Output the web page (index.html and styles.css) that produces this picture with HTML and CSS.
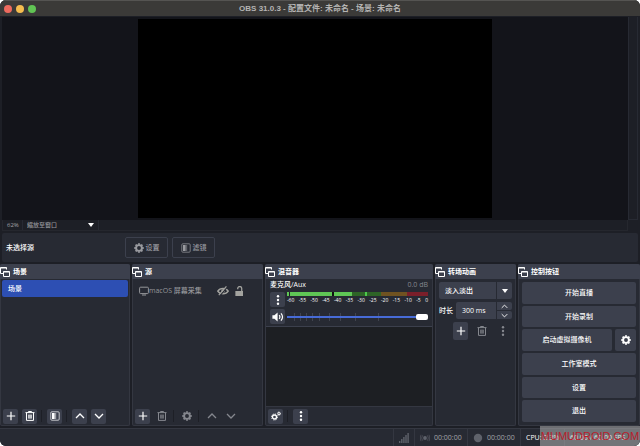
FILE: index.html
```
<!DOCTYPE html>
<html lang="zh-CN">
<head>
    <meta charset="UTF-8">
    <meta name="viewport" content="width=device-width, initial-scale=1.0">
    <title>OBS 31.0.3 - 配置文件: 未命名 - 场景: 未命名</title>
    <link rel="stylesheet" href="styles.css">
</head>
<body>
    <svg class="defs" aria-hidden="true">
        <symbol id="dock" viewBox="0 0 10 10"><path d="M3.5 6.5h-3v-6h6v2M.5 1h6M3.5 4.5h6v5h-6zM3.5 5h6" fill="none" stroke="currentColor"/></symbol>
        <symbol id="plus" viewBox="0 0 10 10"><path d="M5 .8v8.4M.8 5h8.4" fill="none" stroke="currentColor" stroke-width="1.2"/></symbol>
        <symbol id="trash" viewBox="0 0 10 10"><path d="M.5 1.6h9M3.5 1.4V.5h3v.9M1.5 2v7.4h7V2M3.8 3.6v4M5 3.6v4M6.2 3.6v4" fill="none" stroke="currentColor"/></symbol>
        <symbol id="filter" viewBox="0 0 10 10"><rect x=".8" y=".8" width="8.4" height="8.4" rx="1" fill="none" stroke="currentColor" opacity=".7"/><path d="M2 2h2.6v6H2z" fill="currentColor"/><path d="M4.6 2h1.6v6H4.6z" fill="currentColor" opacity=".5"/></symbol>
        <symbol id="up" viewBox="0 0 10 10"><path d="M1 7l4-4 4 4" fill="none" stroke="currentColor" stroke-width="1.3"/></symbol>
        <symbol id="down" viewBox="0 0 10 10"><path d="M1 3l4 4 4-4" fill="none" stroke="currentColor" stroke-width="1.3"/></symbol>
        <symbol id="dots" viewBox="0 0 10 10"><g fill="currentColor"><circle cx="5" cy="1.2" r="1.2"/><circle cx="5" cy="5" r="1.2"/><circle cx="5" cy="8.8" r="1.2"/></g></symbol>
        <symbol id="gear" viewBox="0 0 10 10"><circle cx="5" cy="5" r="2.9" fill="none" stroke="currentColor" stroke-width="1.9"/><path d="M5 .3v1.5M5 8.2v1.5M.3 5h1.5M8.2 5h1.5M1.6 1.6l1.1 1.1M7.3 7.3l1.1 1.1M1.6 8.4l1.1-1.1M7.3 2.7l1.1-1.1" stroke="currentColor" stroke-width="1.9"/></symbol>
        <symbol id="gears" viewBox="0 0 10 10"><g fill="none" stroke="currentColor"><circle cx="3.5" cy="6" r="2" stroke-width="1.3"/><circle cx="3.5" cy="6" r="3" stroke-dasharray="1.2 1.15"/><circle cx="8" cy="2.6" r="1.1"/><circle cx="8" cy="2.6" r="1.7" stroke-width=".7" stroke-dasharray=".7 .6"/></g></symbol>
        <symbol id="screen" viewBox="0 0 10 10"><rect x=".6" y="1.2" width="8.8" height="6.4" rx="1" fill="none" stroke="currentColor"/><path d="M3 9h4" stroke="currentColor"/></symbol>
        <symbol id="hidden" viewBox="0 0 12 10"><path d="M.8 5.2C3 1.6 9 1.6 11.2 5.2 9 8.6 3 8.6.8 5.2z" fill="none" stroke="currentColor" stroke-width="1.5"/><circle cx="6" cy="5" r="1.8" fill="currentColor"/><path d="M2.8 9.8L10.4.8" stroke="#272a33" stroke-width="1.2"/><path d="M1.8 9.2L9.4.4" stroke="currentColor" stroke-width="1.2"/></symbol>
        <symbol id="unlocked" viewBox="0 0 10 11"><path d="M1 5.4h8.4V11H1z" fill="currentColor"/><path d="M3.6 3.6V2.8a2.2 2.2 0 0 1 4.4 0v3" fill="none" stroke="currentColor" stroke-width="1.4"/></symbol>
        <symbol id="speaker" viewBox="0 0 12 10"><path d="M.4 3.2h2L5.6.4v9.2L2.4 6.8h-2z" fill="currentColor"/><path d="M7.2 3.2q1.4 1.8 0 3.6M9 1.4q3 3.6 0 7.2" fill="none" stroke="currentColor" stroke-width="1.2"/></symbol>
        <symbol id="signal" viewBox="0 0 10 10"><path d="M0 8h1.4v2H0zM2.1 6h1.4v4H2.1zM4.2 4h1.4v6H4.2zM6.3 2h1.4v8H6.3zM8.4 0h1.4v10H8.4z" fill="currentColor"/></symbol>
        <symbol id="live" viewBox="0 0 10 10"><circle cx="5" cy="5" r="1.9" fill="currentColor"/><path d="M2.6 2.4q-1.9 2.6 0 5.2M7.4 2.4q1.9 2.6 0 5.2M1 1.8q-1.5 3.2 0 6.4M9 1.8q1.5 3.2 0 6.4" fill="none" stroke="currentColor" stroke-width=".6"/></symbol>
        <symbol id="record" viewBox="0 0 10 10"><circle cx="5" cy="5" r="4.2" fill="currentColor"/></symbol>
    </svg>

    <div class="window">
        <header class="titlebar">
            <div class="lights">
                <button class="light close" aria-label="关闭"></button>
                <button class="light minimize" aria-label="最小化"></button>
                <button class="light zoom" aria-label="缩放"></button>
            </div>
            <h1>OBS 31.0.3 - 配置文件: 未命名 - 场景: 未命名</h1>
        </header>

        <main class="preview">
            <div class="stage"><div class="canvas"></div></div>
            <div class="scroll"></div>
            <div class="zoombar">
                <span class="percent">62%</span>
                <label class="scale">
                    <select aria-label="预览缩放"><option>缩放至窗口</option></select>
                    <span class="arrow"></span>
                </label>
            </div>
        </main>

        <section class="context">
            <span class="context-name">未选择源</span>
            <button class="context-btn"><svg class="icon"><use href="#gear"/></svg>设置</button>
            <button class="context-btn"><svg class="icon"><use href="#filter"/></svg>滤镜</button>
        </section>

        <div class="docks">
            <section class="dock">
                <h2><svg class="icon"><use href="#dock"/></svg>场景</h2>
                <ul class="list">
                    <li class="selected">场景</li>
                </ul>
                <div class="toolbar">
                    <button class="tool" aria-label="添加场景"><svg class="icon"><use href="#plus"/></svg></button>
                    <button class="tool" aria-label="移除场景"><svg class="icon"><use href="#trash"/></svg></button>
                    <i class="sep"></i>
                    <button class="tool" aria-label="场景滤镜"><svg class="icon"><use href="#filter"/></svg></button>
                    <i class="sep"></i>
                    <button class="tool" aria-label="上移"><svg class="icon"><use href="#up"/></svg></button>
                    <button class="tool" aria-label="下移"><svg class="icon"><use href="#down"/></svg></button>
                </div>
            </section>

            <section class="dock">
                <h2><svg class="icon"><use href="#dock"/></svg>源</h2>
                <ul class="list">
                    <li class="source">
                        <svg class="icon"><use href="#screen"/></svg>
                        <span class="source-name">macOS 屏幕采集</span>
                        <button class="toggle" aria-label="可见性"><svg class="icon wide"><use href="#hidden"/></svg></button>
                        <button class="toggle" aria-label="锁定"><svg class="icon"><use href="#unlocked"/></svg></button>
                    </li>
                </ul>
                <div class="toolbar">
                    <button class="tool" aria-label="添加源"><svg class="icon"><use href="#plus"/></svg></button>
                    <button class="tool" aria-label="移除源" disabled><svg class="icon"><use href="#trash"/></svg></button>
                    <i class="sep"></i>
                    <button class="tool" aria-label="源属性" disabled><svg class="icon"><use href="#gear"/></svg></button>
                    <i class="sep"></i>
                    <button class="tool" aria-label="上移" disabled><svg class="icon"><use href="#up"/></svg></button>
                    <button class="tool" aria-label="下移" disabled><svg class="icon"><use href="#down"/></svg></button>
                </div>
            </section>

            <section class="dock">
                <h2><svg class="icon"><use href="#dock"/></svg>混音器</h2>
                <div class="channel">
                    <div class="channel-head"><label for="volume">麦克风/Aux</label><span class="db">0.0 dB</span></div>
                    <div class="channel-row">
                        <button class="tool" aria-label="音频选项"><svg class="icon"><use href="#dots"/></svg></button>
                        <div class="level">
                            <div class="meter"></div>
                            <div class="ticks">
                                <span>-60</span><span>-55</span><span>-50</span><span>-45</span><span>-40</span><span>-35</span><span>-30</span><span>-25</span><span>-20</span><span>-15</span><span>-10</span><span>-5</span><span>0</span>
                            </div>
                        </div>
                    </div>
                    <div class="channel-row">
                        <button class="tool" aria-label="静音"><svg class="icon wide"><use href="#speaker"/></svg></button>
                        <input class="volume" id="volume" type="range" min="0" max="100" value="100">
                    </div>
                </div>
                <div class="mixer-space"></div>
                <div class="toolbar">
                    <button class="tool" aria-label="高级音频属性"><svg class="icon"><use href="#gears"/></svg></button>
                    <i class="sep"></i>
                    <button class="tool" aria-label="混音器菜单"><svg class="icon"><use href="#dots"/></svg></button>
                </div>
            </section>

            <section class="dock">
                <h2><svg class="icon"><use href="#dock"/></svg>转场动画</h2>
                <div class="transitions">
                    <label class="combo">
                        <select aria-label="转场"><option>淡入淡出</option></select>
                        <span class="arrow-box"><span class="arrow"></span></span>
                    </label>
                    <div class="duration">
                        <label for="duration">时长</label>
                        <input id="duration" type="text" value="300 ms">
                        <div class="steps">
                            <button aria-label="增加"><svg class="icon"><use href="#up"/></svg></button>
                            <button aria-label="减少"><svg class="icon"><use href="#down"/></svg></button>
                        </div>
                    </div>
                    <div class="transition-tools">
                        <button class="tool" aria-label="添加转场"><svg class="icon"><use href="#plus"/></svg></button>
                        <button class="tool" aria-label="移除转场" disabled><svg class="icon"><use href="#trash"/></svg></button>
                        <button class="tool" aria-label="转场属性" disabled><svg class="icon"><use href="#dots"/></svg></button>
                    </div>
                </div>
            </section>

            <section class="dock">
                <h2><svg class="icon"><use href="#dock"/></svg>控制按钮</h2>
                <div class="controls">
                    <button>开始直播</button>
                    <button>开始录制</button>
                    <div class="camera">
                        <button>启动虚拟摄像机</button>
                        <button class="camera-config" aria-label="配置虚拟摄像机"><svg class="icon"><use href="#gear"/></svg></button>
                    </div>
                    <button>工作室模式</button>
                    <button>设置</button>
                    <button>退出</button>
                </div>
            </section>
        </div>

        <footer class="status">
            <span class="cell"><svg class="icon"><use href="#signal"/></svg></span>
            <span class="cell timer"><svg class="icon"><use href="#live"/></svg>00:00:00</span>
            <span class="cell timer"><svg class="icon"><use href="#record"/></svg>00:00:00</span>
            <span class="cell cpu">CPU: 2.3%</span>
            <span class="cell fps">60.00 / 60.00 FPS</span>
        </footer>

        <div class="watermark">MUMUDROID.COM</div>
    </div>
</body>
</html>
```
FILE: styles.css
```
* {
    box-sizing: border-box;
}
body {
    margin: 0;
    background-color: #fff;
    font-family: "Open Sans", "Noto Sans CJK SC", sans-serif;
    font-size: 7px;
    font-weight: 500;
    line-height: 10px;
    color: #fff;
}
button, input, select {
    font: inherit;
    color: inherit;
    border: none;
    padding: 0;
    margin: 0;
}
button {
    background-color: #3c404d;
    border-radius: 2px;
    cursor: pointer;
}
.defs {
    display: none;
}
.icon {
    width: 10px;
    height: 10px;
    flex: none;
    display: block;
}
.icon.wide {
    width: 12px;
}
.window {
    position: relative;
    display: flex;
    flex-direction: column;
    height: 100vh;
    overflow: hidden;
    background-color: #1d1f26;
    border-radius: 6px;
}

/* title bar */
.titlebar {
    display: grid;
    grid-template-columns: 1fr auto 1fr;
    align-items: center;
    height: 16px;
    padding: 0 4px;
    background-color: #3b3a38;
    border-top: 1px solid #555452;
}
.lights {
    display: flex;
    gap: 4px;
}
.light {
    width: 8px;
    height: 8px;
    border-radius: 50%;
}
.close {
    background-color: #ed6a5e;
}
.minimize {
    background-color: #f5bd4f;
}
.zoom {
    background-color: #61c454;
}
h1 {
    margin: 0;
    font: bold 8px/12px "Liberation Sans", "Noto Sans CJK SC", sans-serif;
    color: #b5b4b3;
}

/* preview */
.preview {
    flex: 1;
    min-height: 0;
    display: grid;
    grid-template: 1fr 11px / 1fr 10px;
    padding: 1px 2px 0;
}
.stage {
    display: flex;
    justify-content: center;
    padding: 2px 0;
    min-height: 0;
    background-color: #13141a;
}
.canvas {
    height: 100%;
    aspect-ratio: 16 / 9;
    background-color: #000;
}
.scroll {
    border: 1px solid #272a33;
    border-top: none;
}
.zoombar {
    display: flex;
    align-items: center;
    border: 1px solid #25272e;
    border-top: none;
    font-size: 6px;
    color: #a3a4a8;
}
.percent {
    width: 20px;
    padding-left: 4px;
    border-right: 1px solid #272a33;
}
.scale {
    display: flex;
    align-items: center;
    width: 76px;
    padding: 0 4px;
    border-right: 1px solid #272a33;
    color: #96979b;
}
.scale select {
    flex: 1;
    appearance: none;
    background: none;
}
.arrow {
    border: 3px solid transparent;
    border-top: 4px solid #fff;
    border-bottom: none;
}

/* source toolbar */
.context {
    display: flex;
    align-items: center;
    gap: 4px;
    height: 29px;
    margin: 2px 2px 1px;
    padding: 0 4px;
    background-color: #272a33;
    border-radius: 2px;
}
.context-name {
    width: 115px;
}
.context-btn {
    display: flex;
    align-items: center;
    justify-content: center;
    gap: 2px;
    width: 43px;
    height: 21px;
    background: none;
    border: 1px solid #3c404d;
    color: #9a9ba0;
}

/* docks */
.docks {
    display: grid;
    grid-template-columns: 130fr 131fr 168fr 81fr 122fr;
    gap: 2px;
    min-height: 162px;
    margin-top: 1px;
}
.dock {
    display: flex;
    flex-direction: column;
    min-width: 0;
    background-color: #272a33;
    border: 1px solid #343741;
    border-top: none;
    border-radius: 2px;
}
h2 {
    display: flex;
    align-items: center;
    gap: 3px;
    height: 15px;
    margin: 0 -1px;
    font-size: 7px;
    font-weight: bold;
    background-color: #3c404d;
    border-radius: 2px 2px 0 0;
}
.list {
    flex: 1;
    margin: 0;
    padding: 1px;
    list-style: none;
}
.list li {
    display: flex;
    align-items: center;
    height: 17px;
    padding: 0 6px;
    border-radius: 2px;
}
.list .selected {
    background-color: #2d4fb3;
}
.source {
    margin-top: 2px;
    color: #96979b;
}
.list .source {
    padding: 0 5px;
}
.source-name {
    flex: none;
    width: 68px;
}
.toggle {
    width: 17px;
    background: none;
    color: #a3a39f;
}
.toolbar {
    display: flex;
    align-items: center;
    gap: 4px;
    height: 18px;
    padding: 0 2px;
}
.tool {
    display: flex;
    align-items: center;
    justify-content: center;
    flex: none;
    width: 15px;
    height: 15px;
}
.tool:disabled {
    background: none;
    color: #85878e;
}
.sep {
    width: 2px;
    height: 12px;
    border-left: 1px solid #1d1f26;
}

/* audio mixer */
.channel {
    display: flex;
    flex-direction: column;
    gap: 2px;
    padding: 1px 4px 2px;
    border-bottom: 1px solid #3c404d;
}
.channel-head {
    display: flex;
    justify-content: space-between;
}
.db {
    color: #85878e;
}
.channel-row {
    display: flex;
    align-items: center;
    gap: 2px;
}
.level {
    flex: 1;
    align-self: flex-start;
}
.meter {
    height: 4px;
    background: linear-gradient(90deg, transparent 2px, #1d1f26 2px 3px, transparent 3px 45px, #111 45px 47px, transparent 47px 78px, #4cc84c 78px 80px, transparent 80px),
        linear-gradient(90deg, #5fc655 46%, #2e6427 46% 67%, #6f5221 67% 85%, #7a1f2a 85%);
}
.ticks {
    display: flex;
    justify-content: space-between;
    font-size: 5px;
    line-height: 8px;
}
.volume {
    flex: 1;
    min-width: 0;
    height: 8px;
    appearance: none;
    background: linear-gradient(#476bd7, #476bd7) center / 100% 2px no-repeat,
        linear-gradient(90deg, transparent 7px, #41444f 7px 8px, transparent 8px 13px, #41444f 13px 14px, transparent 14px 19px, #41444f 19px 20px, transparent 20px 25px, #41444f 25px 26px, transparent 26px 32px, #41444f 32px 33px, transparent 33px 42px, #41444f 42px 43px, transparent 43px 53px, #41444f 53px 54px, transparent 54px 68px, #41444f 68px 69px, transparent 69px 91px, #41444f 91px 92px, transparent 92px);
}
.volume::-webkit-slider-thumb {
    appearance: none;
    width: 12px;
    height: 6px;
    border-radius: 2px;
    background-color: #fff;
}
.mixer-space {
    flex: 1;
    background-color: #1d1f23;
    border-bottom: 1px solid #343741;
}

/* scene transitions */
.transitions {
    display: flex;
    flex-direction: column;
    gap: 3px;
    padding: 3px;
}
.combo {
    display: flex;
    height: 17px;
    background-color: #3c404d;
    border-radius: 2px;
}
.combo select {
    flex: 1;
    min-width: 0;
    appearance: none;
    background: none;
    padding-left: 6px;
}
.arrow-box {
    display: flex;
    align-items: center;
    justify-content: center;
    width: 16px;
    border-left: 1px solid #272a33;
}
.duration {
    display: flex;
    align-items: center;
    height: 17px;
}
.duration label {
    flex: none;
    width: 17px;
}
.duration input {
    flex: 1;
    min-width: 0;
    height: 100%;
    padding-left: 6px;
    background-color: #3c404d;
    border-radius: 2px 0 0 2px;
}
.steps {
    display: flex;
    flex-direction: column;
    gap: 1px;
    width: 16px;
    height: 100%;
    padding-left: 1px;
}
.steps button {
    display: flex;
    align-items: center;
    justify-content: center;
    flex: 1;
    border-radius: 0 2px 2px 0;
}
.steps .icon {
    width: 7px;
    height: 7px;
}
.transition-tools {
    display: flex;
    justify-content: flex-end;
    gap: 6px;
    padding-right: 2px;
}
.transition-tools .tool {
    height: 18px;
}

/* controls */
.controls {
    flex: 1;
    display: flex;
    flex-direction: column;
    gap: 2px;
    padding: 3px;
}
.controls > * {
    flex: 1;
}
.camera {
    display: flex;
    gap: 3px;
}
.camera button {
    flex: 1;
}
.camera .camera-config {
    display: flex;
    align-items: center;
    justify-content: center;
    flex: none;
    width: 21px;
}

/* status bar */
.status {
    display: flex;
    justify-content: flex-end;
    height: 18px;
    margin-top: 2px;
    background-color: #272a33;
    border-top: 1px solid #343741;
}
.cell {
    display: flex;
    align-items: center;
    padding: 0 5px;
    border-left: 1px solid #343741;
    color: #5f626b;
}
.timer {
    width: 53px;
    gap: 4px;
    color: #a3a4a8;
}
.timer .icon {
    color: #5f626b;
}
.cpu, .fps {
    color: #fff;
}
.cpu {
    width: 44px;
}
.fps {
    width: 76px;
}
.watermark {
    position: absolute;
    right: 0;
    bottom: 0;
    width: 100px;
    font: 11px/20px "Liberation Sans", Arial, sans-serif;
    text-align: center;
    white-space: nowrap;
    color: #b8202c;
    background-color: rgba(190, 190, 190, 0.5);
}
```
